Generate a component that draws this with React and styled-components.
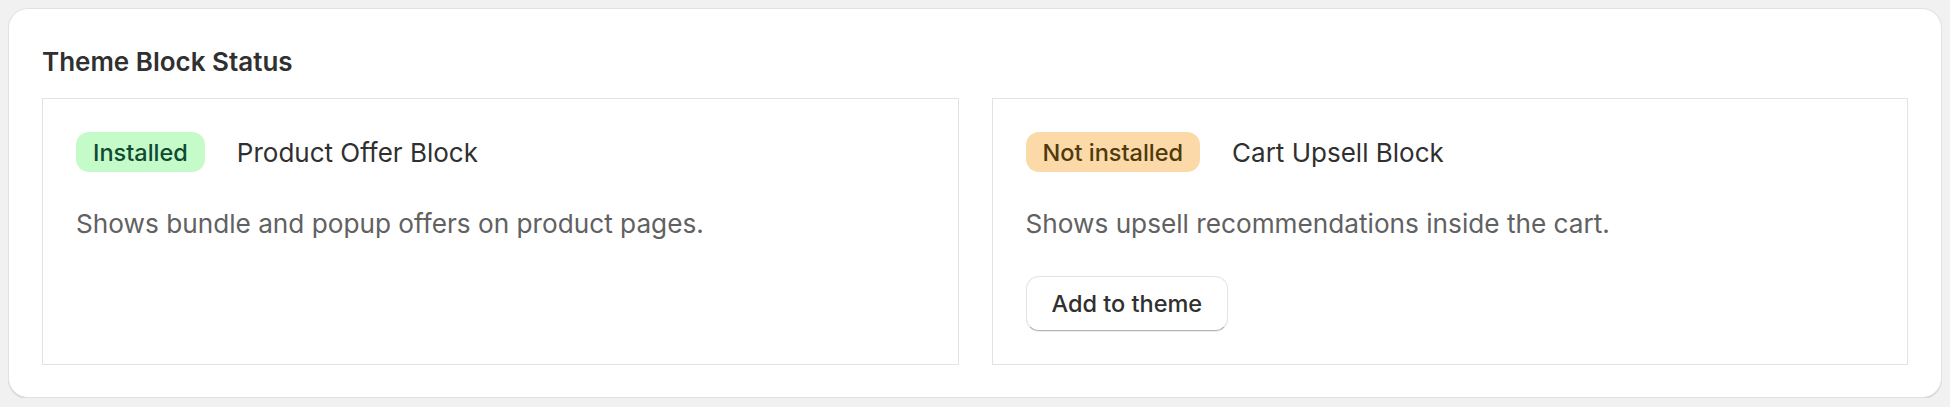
import React from 'react';
import styled, { createGlobalStyle } from 'styled-components';

const GlobalStyle = createGlobalStyle`
  body {
    margin: 8px;
    background: #f1f1f1;
    font-family: Inter, "Noto Sans", sans-serif;
    color: #303030;
  }
`;

const Card = styled.section`
  background: #ffffff;
  border: 1px solid #e1e1e1;
  border-radius: 20px;
  box-shadow: 0 1px 1px rgba(0, 0, 0, 0.12);
  padding: 34px 33px 32px;
`;

const Heading = styled.h2`
  margin: 0 0 17px;
  font-size: 26px;
  line-height: 38px;
  font-weight: 600;
  color: #303030;
`;

const BlockGrid = styled.div`
  display: grid;
  grid-template-columns: 1fr 1fr;
  gap: 33px;
`;

const BlockBox = styled.div`
  border: 1px solid #e3e3e3;
  padding: 33px;
  display: flex;
  flex-direction: column;
  align-items: flex-start;
  gap: 33px;
`;

const TitleRow = styled.div`
  display: flex;
  align-items: center;
  gap: 32px;
`;

const Badge = styled.span`
  display: inline-flex;
  align-items: center;
  height: 40px;
  padding: 0 17px;
  border-radius: 13px;
  font-size: 23.5px;
  font-weight: 500;
  background: ${({ $installed }) => ($installed ? '#c4fbc9' : '#fbd9a9')};
  color: ${({ $installed }) => ($installed ? '#0f4a33' : '#4f3a0c')};
`;

const Title = styled.span`
  font-size: 26px;
  font-weight: 400;
  color: #303030;
`;

const Description = styled.p`
  margin: 0;
  font-size: 26.2px;
  line-height: 38px;
  color: #616161;
`;

const Button = styled.button`
  height: 55px;
  padding: 0 25px;
  border: 1px solid #e3e3e3;
  border-bottom-color: #b5b5b5;
  border-radius: 13px;
  background: #ffffff;
  box-shadow: 0 1px 0 rgba(0, 0, 0, 0.08);
  font-family: Inter, "Noto Sans", sans-serif;
  font-size: 23.5px;
  font-weight: 550;
  color: #303030;
  cursor: pointer;
`;

const blocks = [
  {
    name: 'Product Offer Block',
    installed: true,
    description: 'Shows bundle and popup offers on product pages.',
  },
  {
    name: 'Cart Upsell Block',
    installed: false,
    description: 'Shows upsell recommendations inside the cart.',
  },
];

const App = () => (
  <>
    <GlobalStyle />
    <Card>
      <Heading>Theme Block Status</Heading>
      <BlockGrid>
        {blocks.map((block) => (
          <BlockBox key={block.name}>
            <TitleRow>
              <Badge $installed={block.installed}>
                {block.installed ? 'Installed' : 'Not installed'}
              </Badge>
              <Title>{block.name}</Title>
            </TitleRow>
            <Description>{block.description}</Description>
            {!block.installed && <Button>Add to theme</Button>}
          </BlockBox>
        ))}
      </BlockGrid>
    </Card>
  </>
);

export default App;
